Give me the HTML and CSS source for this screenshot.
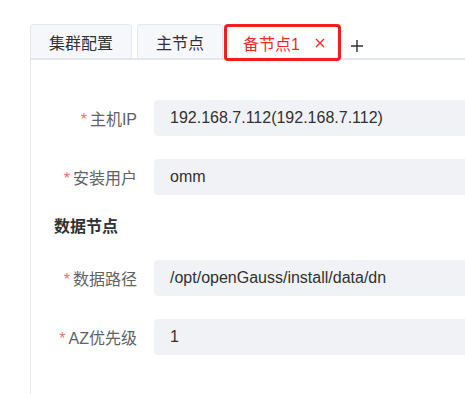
FILE: index.html
```html
<!DOCTYPE html>
<html lang="zh-CN">
<head>
  <meta charset="UTF-8">
  <meta name="viewport" content="width=device-width,initial-scale=1.0">
  <title>备节点配置</title>
  <link rel="stylesheet" href="styles.css">
</head>
<body>

  <!-- Вкладки -->
  <nav class="tabs">
    <div class="tab">集群配置</div>
    <div class="tab">主节点</div>
    <div class="tab active">
      <span>备节点1</span>
      <svg class="tab-close" width="10" height="10" viewBox="0 0 10 10">
        <path d="M1 1L9 9M9 1L1 9" stroke="currentColor" stroke-width="1.4" fill="none"/>
      </svg>
    </div>
    <button class="tab-add">
      <svg width="12" height="12" viewBox="0 0 12 12">
        <path d="M6 0V12M0 6H12" stroke="currentColor" stroke-width="1.4" fill="none"/>
      </svg>
    </button>
  </nav>

  <!-- Форма -->
  <div class="panel">
    <div class="form-row">
      <label class="form-label"><i>*</i>主机IP</label>
      <div class="form-value">192.168.7.112(192.168.7.112)</div>
    </div>
    <div class="form-row">
      <label class="form-label"><i>*</i>安装用户</label>
      <div class="form-value">omm</div>
    </div>

    <h3 class="section-title">数据节点</h3>

    <div class="form-row">
      <label class="form-label"><i>*</i>数据路径</label>
      <div class="form-value">/opt/openGauss/install/data/dn</div>
    </div>
    <div class="form-row">
      <label class="form-label"><i>*</i>AZ优先级</label>
      <div class="form-value">1</div>
    </div>
  </div>

</body>
</html>
```

FILE: styles.css
```css
* { margin:0; padding:0; box-sizing:border-box; }
html, body { height:100%; }
body {
  background:#fff; overflow:hidden;
  display:flex; flex-direction:column;
  padding:24px 0 0 30px;
  font-family:'Liberation Sans','Noto Sans CJK SC',sans-serif;
  font-size:16px; color:#303133;
}

/* Вкладки */
.tabs {
  display:flex; align-items:flex-start; gap:5px; flex-shrink:0;
  height:36px; border-bottom:2px solid #e4e7ed;
}
.tab {
  height:34px; padding:0 18px;
  display:flex; align-items:center; gap:15px;
  background:#f5f7fa; border:1px solid #e4e7ed; border-bottom:none;
  border-radius:4px 4px 0 0; color:#303133; white-space:nowrap;
}
.tab.active {
  position:relative; z-index:1; margin-left:-4px;
  height:37px; padding:0 13px 0 19px;
  background:#fff; border:3px solid #f21d1d; border-radius:4px;
  color:#ee2a2a;
}
.tab.active span { margin-left:-3px; }
.tab-close { color:#ee2a2a; margin-top:1px; }
.tab-add {
  margin:12px 0 0 1px; width:20px; height:20px;
  background:none; border:none; color:#303133;
  display:flex; align-items:center; justify-content:center;
}

/* Панель */
.panel {
  flex:1; min-height:0; border-left:1px solid #e4e7ed;
  padding-top:40px;
}
.form-row {
  display:flex; align-items:center; height:36px; margin-bottom:23px;
}
.form-label {
  width:106px; text-align:right; color:#606266; white-space:nowrap;
}
.form-label i {
  font-style:normal; color:#f56c6c; margin-right:3px;
}
.form-value {
  margin-left:17px; flex:1; height:36px; line-height:36px;
  padding-left:16px; background:#f0f2f5; border-radius:4px 0 0 4px;
  color:#303133; white-space:nowrap;
}
.section-title {
  font-size:16px; font-weight:bold; color:#303133;
  line-height:24px; margin:-3px 0 21px 23px;
}
```
